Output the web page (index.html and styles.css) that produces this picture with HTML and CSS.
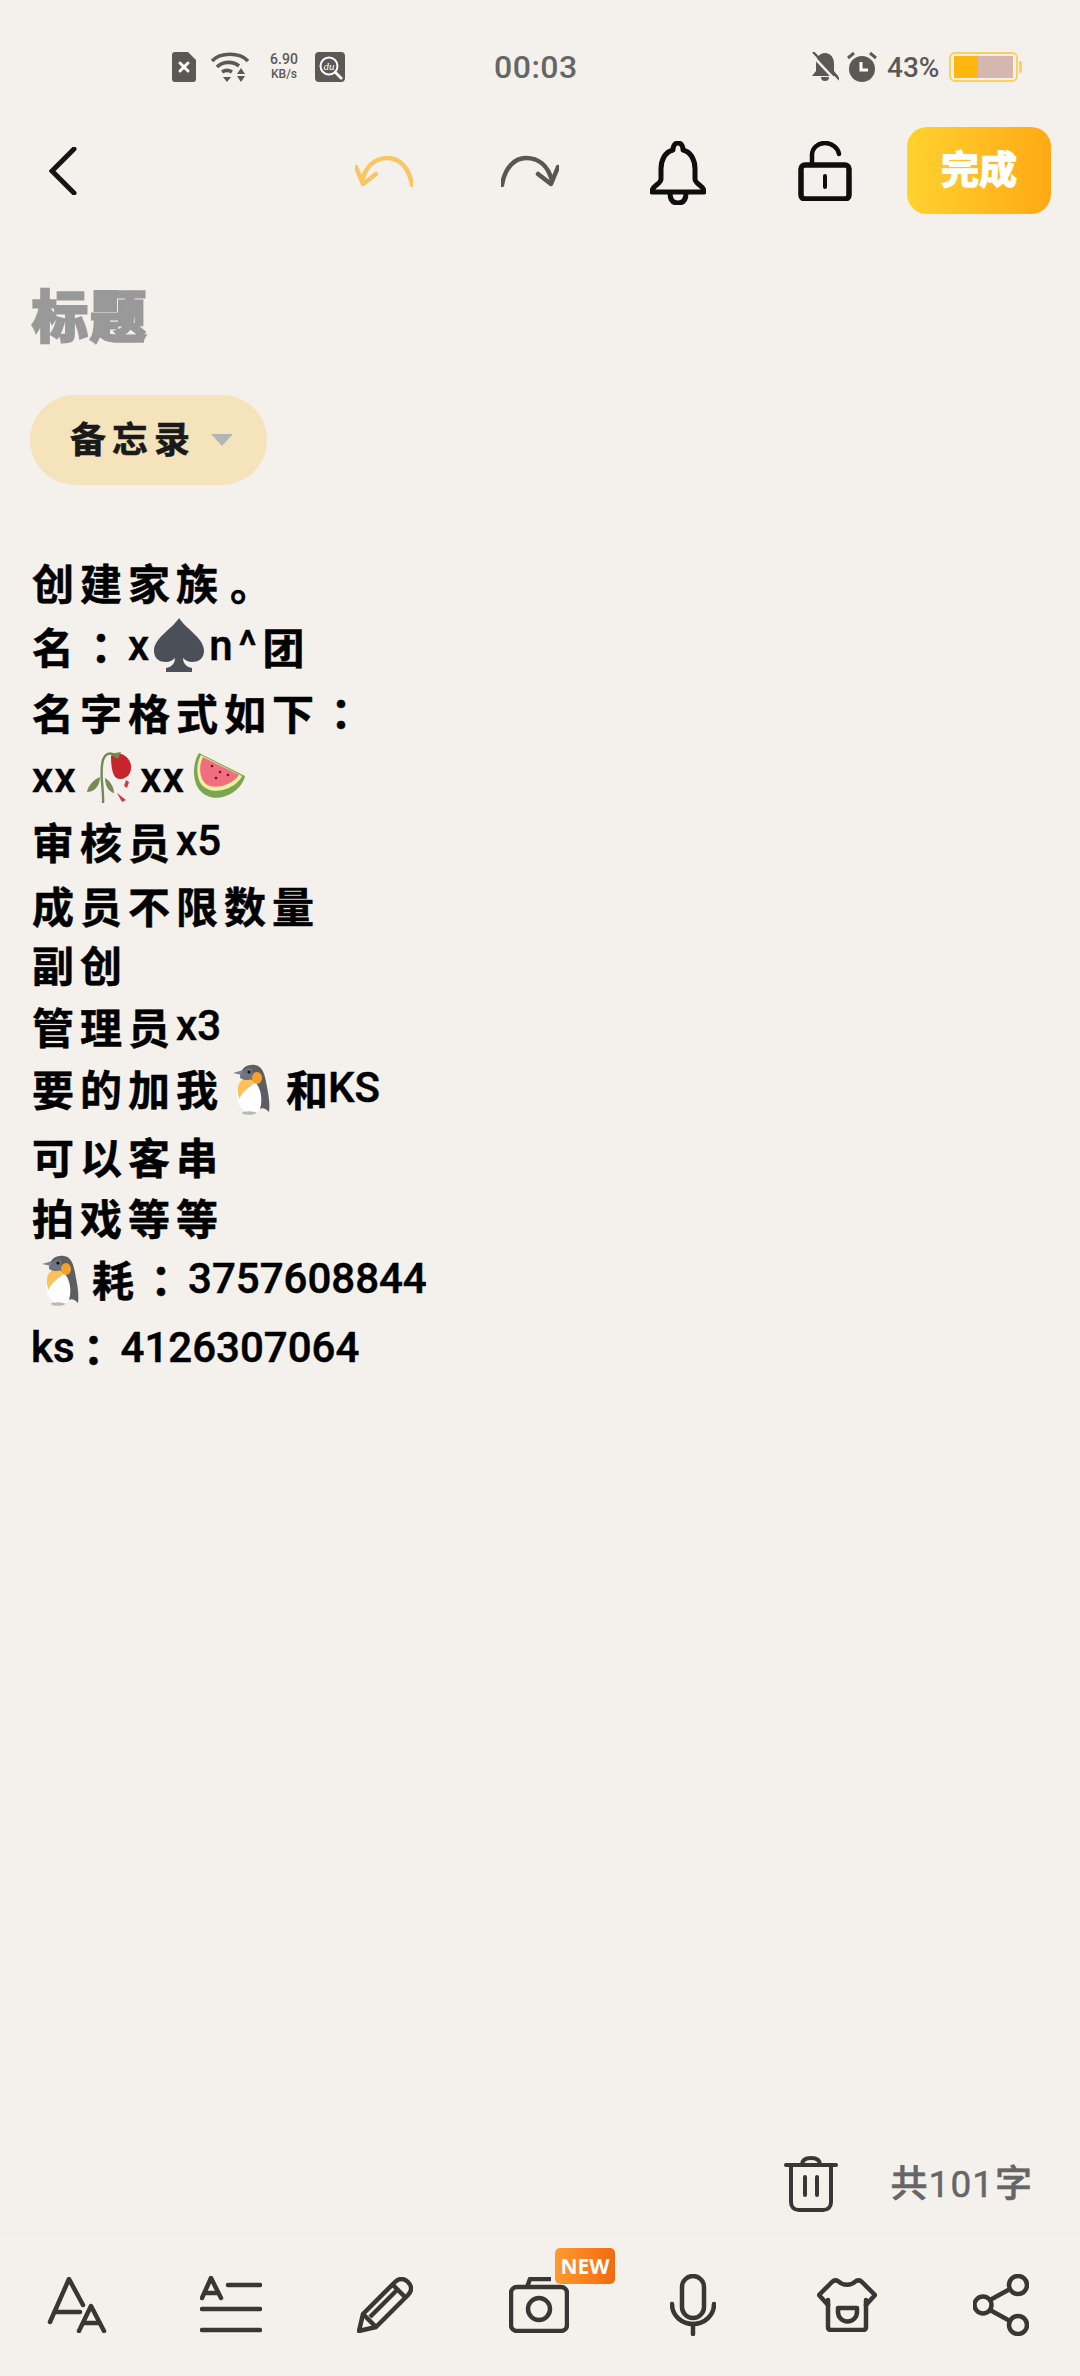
FILE: index.html
```html
<!DOCTYPE html>
<html lang="zh">
  <head>
    <meta charset="UTF-8" />
    <meta name="viewport" content="width=device-width, initial-scale=1" />
    <title>备忘录</title>
    <link rel="stylesheet" href="styles.css">
  </head>
  <body>
    <svg class="defs" width="0" height="0">
      <symbol id="penguin" viewBox="0 0 38 52">
        <ellipse cx="19" cy="32" rx="15" ry="18" fill="#fff"/>
        <path d="M5 30C4 22 7 17 12 16L24 17C20 23 12 25 6 36Z" fill="#fbc25a"/>
        <path d="M7 14C8 4 15 1 22 2C30 3 32 12 34 24C36 34 37 42 36 49C33 46 30 44 27 46C30 36 28 24 21 18C15 14 10 14 7 14Z" fill="#5d5e62"/>
        <path d="M7 15C10 6 15 4 19 6L20 16C14 18 10 17 7 15Z" fill="#6f7280"/>
        <path d="M0 10L10 7L9 12Z" fill="#80828a"/>
        <circle cx="16" cy="9" r="1.6" fill="#111"/>
        <ellipse cx="24" cy="15" rx="5" ry="6" fill="#f4a12c"/>
        <ellipse cx="16" cy="50" rx="7" ry="1.8" fill="#b9b9b9"/>
      </symbol>
    </svg>

    <div class="page">
      <div class="status">
        <svg class="st-sim" width="24" height="30" viewBox="0 0 24 30"><path d="M3 0H16L24 8V27A3 3 0 0 1 21 30H3A3 3 0 0 1 0 27V3A3 3 0 0 1 3 0Z" fill="#5c5856"/><path d="M8 11L16 19M16 11L8 19" stroke="#fff" stroke-width="3" stroke-linecap="round"/></svg>
        <svg class="st-wifi" width="38" height="30" viewBox="0 0 38 30"><g fill="none" stroke="#5c5856" stroke-width="3.6"><path d="M1 9C9 0 29 0 37 9"/><path d="M6 15C12 9 22 9 28 14"/><path d="M11 20C14 18 18 18 21 20"/></g><path d="M12 25L20 25L16 30Z M26 22L34 22L30 16Z M26 24L34 24L30 30Z" fill="#5c5856"/></svg>
        <div class="st-speed"><span>6.90</span><span>KB/s</span></div>
        <svg class="st-du" width="30" height="30" viewBox="0 0 30 30"><rect width="30" height="30" rx="4" fill="#5c5856"/><circle cx="14" cy="14" r="8.5" fill="none" stroke="#fff" stroke-width="2"/><path d="M20 20L27 27" stroke="#fff" stroke-width="2.6"/><text x="14" y="17.500" class="du-text" text-anchor="middle">du</text></svg>
        <div class="st-time">00:03</div>
        <svg class="st-mute" width="28" height="30" viewBox="0 0 28 30"><path d="M14 1C20 1 23 6 23 12V19L27 24H1L5 19V12C5 6 8 1 14 1Z" fill="#5c5856"/><path d="M10 25H18A4 4 0 0 1 10 25Z" fill="#5c5856"/><path d="M-1 1L27 31" stroke="#f4f1ec" stroke-width="2.500"/><path d="M2 0L29 28" stroke="#5c5856" stroke-width="2.400"/></svg>
        <svg class="st-alarm" width="30" height="30" viewBox="0 0 30 30"><circle cx="15" cy="17" r="13" fill="#5c5856"/><path d="M1 6L7 1M29 6L23 1" stroke="#5c5856" stroke-width="3"/><path d="M14 10V18H21" fill="none" stroke="#fff" stroke-width="3"/></svg>
        <div class="st-batt-text">43%</div>
        <div class="battery"><div class="batt-fill"></div><div class="batt-empty"></div></div>
        <div class="batt-nub"></div>
      </div>

      <div class="toolbar">
        <svg class="tb-back" width="28" height="48" viewBox="0 0 28 48"><path d="M25 2L3 24L25 46" fill="none" stroke="#141414" stroke-width="5" stroke-linecap="round"/></svg>
        <svg class="tb-undo" width="58" height="32" viewBox="0 0 58 32"><path d="M57 30C54 12 44 3 33 3C21 3 11 10 7 26" fill="none" stroke="#f8c662" stroke-width="4.500" stroke-linecap="round"/><path d="M1 12L8 29L21 19" fill="none" stroke="#f8c662" stroke-width="4.500" stroke-linecap="round" stroke-linejoin="round"/></svg>
        <svg class="tb-redo" width="58" height="32" viewBox="0 0 58 32"><path d="M1 30C4 12 14 3 25 3C37 3 47 10 51 26" fill="none" stroke="#5a5654" stroke-width="4.500" stroke-linecap="round"/><path d="M57 12L50 29L37 19" fill="none" stroke="#5a5654" stroke-width="4.500" stroke-linecap="round" stroke-linejoin="round"/></svg>
        <svg class="tb-bell" width="56" height="64" viewBox="0 0 56 64"><path d="M28 2C32 2 33 6 33 9C41 11 45 19 45 28V38C45 43 54 45 54 50V51H2V50C2 45 11 43 11 38V28C11 19 15 11 23 9C23 6 24 2 28 2Z" fill="none" stroke="#0e0e0e" stroke-width="5" stroke-linejoin="round"/><path d="M20 52C20 60 24 62 28 62C32 62 36 60 36 52" fill="none" stroke="#0e0e0e" stroke-width="5"/></svg>
        <svg class="tb-lock" width="54" height="60" viewBox="0 0 54 60"><path d="M14 24V14C14 7 20 2 27 2C34 2 40 7 41 13" fill="none" stroke="#0e0e0e" stroke-width="4.500" stroke-linecap="round"/><rect x="3" y="24" width="48" height="34" rx="4" fill="none" stroke="#0e0e0e" stroke-width="5.500"/><path d="M27 35V46" stroke="#0e0e0e" stroke-width="4" stroke-linecap="round"/></svg>
        <div class="done-btn">完成</div>
      </div>

      <div class="title">标题</div>

      <div class="chip">
        <span class="chip-text">备忘录</span>
        <span class="chip-arrow"></span>
      </div>

      <div class="note">
        <div class="ln gap-64">创建家族<span class="dot">。</span></div>
        <div class="ln gap-66">名<span class="colon">：</span><span class="lat">x</span><svg class="emoji spade" width="50" height="54" viewBox="0 0 50 54"><path d="M25 0C33 12 50 20 50 33C50 41 44 44 38 44C34 44 31 42 29 40C29 45 32 49 38 50V54H12V50C18 49 21 45 21 40C19 42 16 44 12 44C6 44 0 41 0 33C0 20 17 12 25 0Z" fill="#4b5058"/></svg><span class="lat lat-wide">n^</span>团</div>
        <div class="ln gap-66">名字格式如下<span class="colon">：</span></div>
        <div class="ln gap-63"><span class="lat lat-xx">xx</span><svg class="emoji rose" width="48" height="54" viewBox="0 0 48 54"><path d="M18 53C19 38 14 24 18 10C20 4 25 1 31 6" fill="none" stroke="#73895a" stroke-width="2.400"/><path d="M15 27C8 30 3 36 2 42C9 42 15 36 15 27Z" fill="#788a55"/><path d="M20 28C24 30 29 36 29 43C24 42 20 36 20 28Z" fill="#788a55"/><path d="M26 6C34 0 44 6 46 15C47 25 40 29 35 29C29 29 26 22 26 6Z" fill="#c8242b"/><path d="M24 4L36 2L33 9Z" fill="#6e8a4a"/><path d="M41 30L44 32L42 38L39 36Z M32 43L41 50L37 52Z" fill="#d33a48"/></svg><span class="lat lat-xx">xx</span><svg class="emoji melon" width="54" height="50" viewBox="0 0 54 50"><path d="M7 1L53 24C49 42 20 56 6 36C0 26 1 10 7 1Z" fill="#7aa551"/><path d="M9 3L50 24C45 36 20 46 9 32C4 24 4 12 9 3Z" fill="#f0efa3"/><path d="M11 5L47 23C40 33 20 40 12 30C7 23 7 13 11 5Z" fill="#f26d7d"/><circle cx="20" cy="14" r="1.300" fill="#5a2328"/><circle cx="28" cy="20" r="1.300" fill="#5a2328"/><circle cx="36" cy="23" r="1.300" fill="#5a2328"/><circle cx="24" cy="26" r="1.300" fill="#5a2328"/></svg></div>
        <div class="ln gap-64">审核员<span class="lat">x5</span></div>
        <div class="ln gap-59">成员不限数量</div>
        <div class="ln gap-62">副创</div>
        <div class="ln gap-62">管理员<span class="lat">x3</span></div>
        <div class="ln gap-68">要的加我<svg class="emoji peng" width="38" height="52"><use href="#penguin"/></svg><span class="he">和</span><span class="lat">KS</span></div>
        <div class="ln gap-61">可以客串</div>
        <div class="ln gap-62">拍戏等等</div>
        <div class="ln gap-69 ln-qq"><svg class="emoji peng" width="38" height="52"><use href="#penguin"/></svg>耗<span class="colon">：</span><span class="lat">3757608844</span></div>
        <div class="ln"><span class="lat lat-ks">ks</span><span class="colon">：</span><span class="lat">4126307064</span></div>
      </div>

      <div class="count-row">
        <svg width="54" height="56" viewBox="0 0 54 56"><path d="M2 9H52" stroke="#3a3634" stroke-width="4" stroke-linecap="round"/><path d="M18 9C18 4 22 2 27 2C32 2 36 4 36 9" fill="none" stroke="#3a3634" stroke-width="4"/><path d="M7 9V46C7 51 10 54 15 54H39C44 54 47 51 47 46V9" fill="none" stroke="#3a3634" stroke-width="4"/><path d="M21 21V39M33 21V39" stroke="#3a3634" stroke-width="4" stroke-linecap="round"/></svg>
        <div class="count-text">共<span class="count-num">101</span>字</div>
      </div>

      <div class="bottom">
        <div class="cell"><svg width="60" height="56" viewBox="0 0 60 56"><g fill="none" stroke="#3a3634" stroke-width="4.500" stroke-linecap="round" stroke-linejoin="round"><path d="M3 45L22 2L36 28"/><path d="M8 35H33"/><path d="M32 54L44 29L57 54"/><path d="M37 46H52"/></g></svg></div>
        <div class="cell"><svg width="62" height="58" viewBox="0 0 62 58"><g fill="none" stroke="#3a3634" stroke-width="4.500" stroke-linecap="round" stroke-linejoin="round"><path d="M2 22L11 2L21 22"/><path d="M5 17H18"/><path d="M28 9H60"/><path d="M2 33H60"/><path d="M2 54H60"/></g></svg></div>
        <div class="cell"><svg width="56" height="56" viewBox="0 0 56 56"><g fill="none" stroke="#3a3634" stroke-width="4.500" stroke-linejoin="round"><path d="M2 54L6 37L38 5C42 1 47 1 51 5C55 9 55 14 51 18L19 50Z"/><path d="M36 8L48 20"/><path d="M13 40L41 12"/><path d="M6 37L19 50"/></g></svg></div>
        <div class="cell cell-cam">
          <svg width="60" height="56" viewBox="0 0 60 56"><g fill="none" stroke="#3a3634" stroke-width="4.500" stroke-linejoin="round"><rect x="2" y="10" width="56" height="44" rx="6"/><path d="M18 10L21 2H42"/><circle cx="30" cy="32" r="11"/></g></svg>
          <div class="new-badge">NEW</div>
        </div>
        <div class="cell"><svg width="46" height="62" viewBox="0 0 46 62"><g fill="none" stroke="#3a3634" stroke-width="4.500" stroke-linecap="round"><rect x="12" y="2" width="22" height="42" rx="11"/><path d="M2 30C2 42 12 50 23 50C34 50 44 42 44 30"/><path d="M23 50V60"/></g></svg></div>
        <div class="cell"><svg width="60" height="54" viewBox="0 0 60 54"><g fill="none" stroke="#3a3634" stroke-width="4.500" stroke-linecap="round" stroke-linejoin="round"><path d="M11 27L2 17L15 4C17 2 19 2 21 3C26 8 34 8 39 3C41 2 43 2 45 4L58 17L49 27"/><path d="M11 22V49C11 51 12 52 14 52H46C48 52 49 51 49 49V22"/><path d="M21 30H40V34A9.500 9.500 0 0 1 21 34Z"/></g></svg></div>
        <div class="cell"><svg width="56" height="62" viewBox="0 0 56 62"><g fill="none" stroke="#3a3634" stroke-width="4.500"><circle cx="45" cy="11" r="9"/><circle cx="10" cy="31" r="8.500"/><circle cx="45" cy="51" r="9"/><path d="M17 26L37 15M17 36L37 47"/></g></svg></div>
      </div>
    </div>
  </body>
</html>
```

FILE: styles.css
```css
body {
  margin: 0;
  background-color: #f4f1ec;
  font-family: "Noto Sans CJK SC", "Noto Sans", sans-serif;
}
.defs {
  position: absolute;
}
.page {
  width: 1080px;
  height: 2376px;
  display: flex;
  flex-direction: column;
  overflow: hidden;
}

/* status bar */
.status {
  display: flex;
  align-items: center;
  height: 30px;
  padding: 52px 0 0 172px;
  color: #5c5856;
  font-family: Roboto, sans-serif;
}
.st-wifi {
  margin-left: 15px;
}
.st-speed {
  display: flex;
  flex-direction: column;
  align-items: center;
  width: 30px;
  margin-left: 20px;
  font-size: 14px;
  font-weight: 500;
  line-height: 15px;
}
.st-speed span:last-child {
  font-size: 12px;
}
.st-du {
  margin-left: 16px;
}
.du-text {
  font-family: "Liberation Serif", serif;
  font-style: italic;
  font-size: 11px;
  fill: #fff;
}
.st-time {
  width: 84px;
  margin-left: 149px;
  font-size: 32px;
  font-weight: 500;
  letter-spacing: .5px;
  color: #666;
}
.st-mute {
  margin-left: 233px;
}
.st-alarm {
  margin-left: 8px;
}
.st-batt-text {
  width: 50px;
  margin-left: 10px;
  font-size: 28px;
  font-weight: 500;
}
.battery {
  display: flex;
  width: 59px;
  height: 22px;
  margin-left: 12px;
  padding: 2px 3px;
  border: 2px solid #f7d25f;
  border-radius: 6px;
}
.batt-fill {
  width: 24px;
  background-color: #ffb70f;
}
.batt-empty {
  flex: 1;
  background-color: #d6b7b0;
}
.batt-nub {
  width: 3px;
  height: 12px;
  margin-left: 1px;
  background-color: #f7d25f;
  border-radius: 0 2px 2px 0;
}

/* top toolbar */
.toolbar {
  display: flex;
  align-items: center;
  height: 87px;
  margin-top: 45px;
  padding-left: 49px;
}
.tb-undo {
  margin-left: 278px;
}
.tb-redo {
  margin-left: 88px;
}
.tb-bell {
  margin-left: 91px;
  margin-top: 4px;
}
.tb-lock {
  margin-left: 92px;
}
.done-btn {
  width: 144px;
  height: 87px;
  margin-left: 55px;
  line-height: 80px;
  text-align: center;
  color: #fff;
  font-size: 38px;
  font-weight: 700;
  -webkit-text-stroke: 1.5px #fff;
  background: linear-gradient(90deg, #ffd22f, #ffa914);
  border-radius: 20px;
}

/* title and category */
.title {
  margin: 63px 0 0 32px;
  font-size: 56px;
  line-height: 72px;
  font-weight: 700;
  letter-spacing: 2px;
  color: #999;
  -webkit-text-stroke: 3px #999;
}
.chip {
  display: flex;
  align-items: center;
  flex: none;
  width: 237px;
  height: 90px;
  margin: 46px 0 0 30px;
  background-color: #f5e3bc;
  border-radius: 45px;
}
.chip-text {
  margin: 0 0 6px 40px;
  font-size: 36px;
  font-weight: 700;
  letter-spacing: 6px;
  color: #1a1a1a;
  -webkit-text-stroke: .6px #1a1a1a;
}
.chip-arrow {
  width: 0;
  height: 0;
  margin-left: 15px;
  border-left: 11px solid transparent;
  border-right: 11px solid transparent;
  border-top: 12px solid #b3b6b4;
}

/* note body */
.note {
  margin-top: 66px;
  padding-left: 32px;
  color: #000;
  font-size: 42px;
  font-weight: 700;
  letter-spacing: 6px;
  -webkit-text-stroke: .5px #000;
}
.ln {
  display: flex;
  align-items: center;
  height: 60px;
  white-space: nowrap;
}
.gap-59 { margin-bottom: -1px; }
.gap-61 { margin-bottom: 1px; }
.gap-62 { margin-bottom: 2px; }
.gap-63 { margin-bottom: 3px; }
.gap-64 { margin-bottom: 4px; }
.gap-66 { margin-bottom: 6px; }
.gap-68 { margin-bottom: 8px; }
.gap-69 { margin-bottom: 9px; }
.colon {
  font-family: "Noto Sans CJK TC", sans-serif;
}
.dot {
  margin-left: 6px;
}
.lat {
  font-family: Roboto, sans-serif;
  font-weight: 500;
  letter-spacing: 0;
}
.lat-wide {
  letter-spacing: 6px;
}
.lat-xx {
  letter-spacing: 1.5px;
}
.lat-ks {
  margin-left: -1px;
  margin-right: -2px;
}
.he {
  letter-spacing: 0;
}
.emoji {
  flex: none;
  margin: 0 5px;
}
.rose {
  margin: 0 7px 0 8px;
}
.melon {
  margin: 0 0 0 6px;
}
.peng {
  margin: 4px 15px 0 9px;
}
.ln-qq .peng {
  margin-left: 10px;
  margin-right: 12px;
}

/* word count */
.count-row {
  display: flex;
  align-items: center;
  justify-content: flex-end;
  gap: 53px;
  margin-top: auto;
  margin-bottom: 18px;
  padding-right: 48px;
}
.count-text {
  margin-bottom: 6px;
  font-size: 37px;
  font-weight: 500;
  color: #666;
  -webkit-text-stroke: .5px #666;
}
.count-num {
  margin: 0 1px;
  font-family: Roboto, sans-serif;
  font-weight: 400;
  letter-spacing: 1px;
}

/* bottom toolbar */
.bottom {
  display: grid;
  grid-template-columns: repeat(7, 154px);
  height: 142px;
  border-top: 2px solid #f0eee9;
}
.cell {
  display: flex;
  align-items: center;
  justify-content: center;
}
.cell-cam {
  position: relative;
}
.new-badge {
  position: absolute;
  top: 14px;
  left: 93px;
  width: 60px;
  height: 36px;
  line-height: 36px;
  text-align: center;
  color: #fff;
  font-family: "Noto Sans", sans-serif;
  font-size: 21px;
  font-weight: 700;
  background: linear-gradient(90deg, #ff9a30, #f26a10);
  border-radius: 5px;
}
```
